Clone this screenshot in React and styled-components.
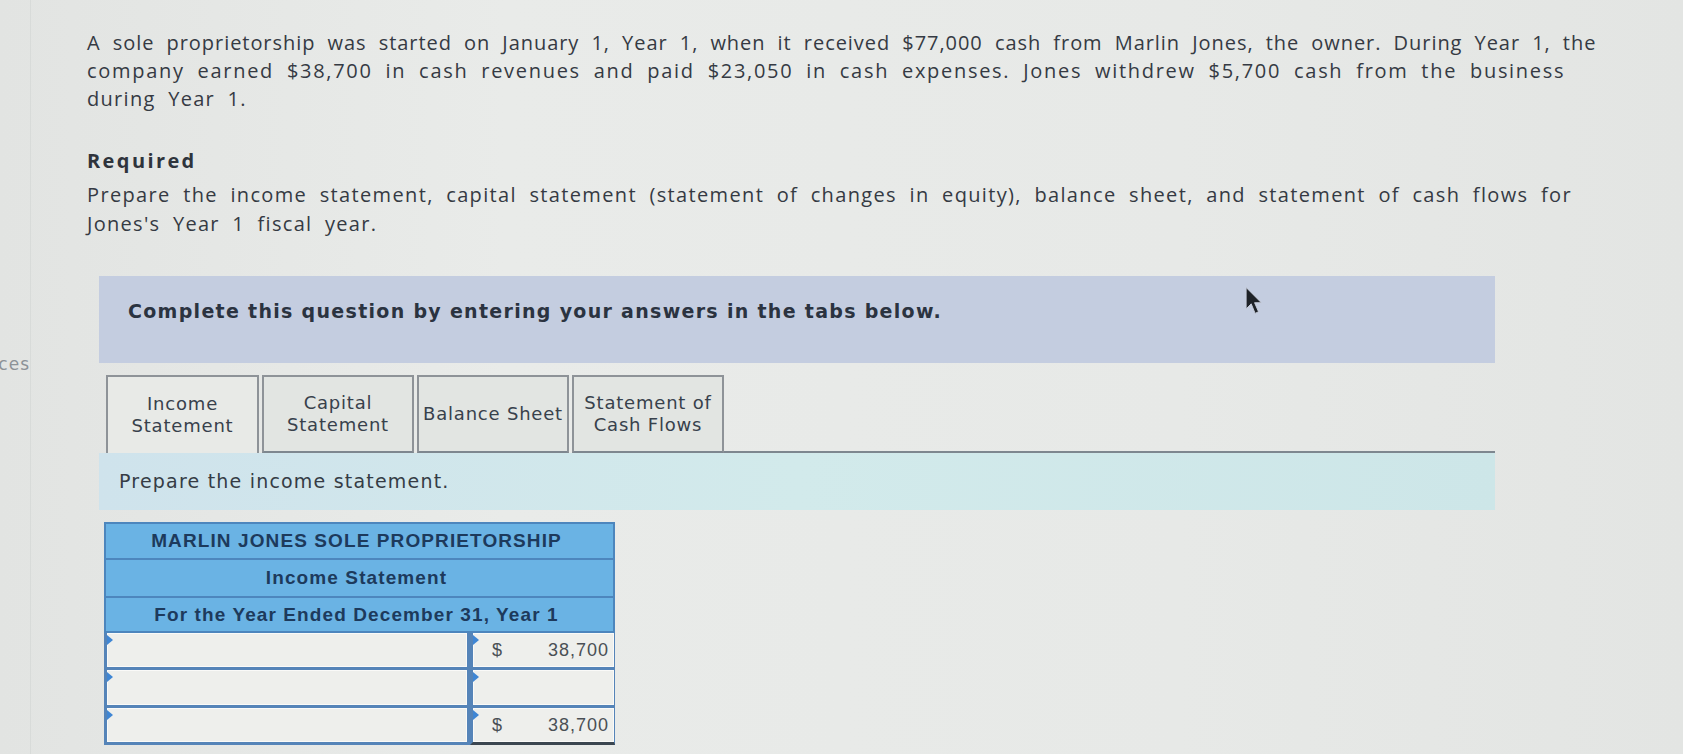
import styled, { createGlobalStyle } from "styled-components";

const GlobalStyle = createGlobalStyle`
    body {
        margin: 0;
        background: #e6e8e6;
        font-family: "Open Sans", "Lato", sans-serif;
    }
`;

const Page = styled.div`
    display: flex;
    min-height: 754px;
    background: linear-gradient(90deg, #e2e4e2 0%, #e9ebe9 30%, #e7e9e7 70%, #e3e5e3 100%);
`;

const Sidebar = styled.div`
    width: 30px;
    flex-shrink: 0;
    display: flex;
    justify-content: flex-end;
    overflow: hidden;
    padding-top: 354px;
    border-right: 1px solid #d8dbd9;
`;

const SideLabel = styled.span`
    font-family: "DejaVu Sans", sans-serif;
    font-size: 17px;
    letter-spacing: 1px;
    color: #8c9297;
    white-space: nowrap;
    height: 20px;
`;

const Main = styled.div`
    flex: 1;
    padding: 29px 0 0 56px;
`;

const Para = styled.p`
    margin: 0;
    font-size: 20px;
    line-height: 28px;
    color: #353a43;
    word-spacing: 6px;
    white-space: nowrap;
`;

const Line = styled.span`
    display: block;
    letter-spacing: ${(p) => p.$ls}px;
`;

const Required = styled.h3`
    margin: 34px 0 5px;
    font-size: 20px;
    line-height: 28px;
    font-weight: 700;
    color: #2f343c;
    letter-spacing: 2.4px;
`;

const Task = styled(Para)`
    line-height: 29px;
`;

const Question = styled.div`
    margin: 38px 0 0 12px;
    width: 1396px;
`;

const Band = styled.div`
    position: relative;
    height: 87px;
    box-sizing: border-box;
    padding: 23px 0 0 29px;
    background: #c4cde0;
    font-family: "DejaVu Sans", sans-serif;
    font-weight: 700;
    font-size: 19px;
    letter-spacing: 1.3px;
    line-height: 24px;
    color: #2b3340;
`;

const Cursor = styled.svg`
    position: absolute;
    left: 1146px;
    top: 10px;
`;

const TabRow = styled.div`
    display: flex;
    align-items: stretch;
    margin-top: 12px;
    padding-left: 7px;
`;

const Tab = styled.div`
    width: ${(p) => (p.$active ? 153 : 152)}px;
    height: 78px;
    box-sizing: border-box;
    margin-right: 3px;
    display: flex;
    align-items: center;
    justify-content: center;
    text-align: center;
    font-family: "DejaVu Sans", sans-serif;
    font-size: 18px;
    letter-spacing: 0.8px;
    line-height: 22px;
    color: #38414c;
    background: ${(p) => (p.$active ? "#e8eae7" : "#e2e5e2")};
    border: 2px solid #8e9398;
    border-bottom: ${(p) => (p.$active ? "none" : "2px solid #7e878f")};
`;

const TabFill = styled.div`
    flex: 1;
    margin-left: -3px;
    border-bottom: 2px solid #7e878f;
`;

const Panel = styled.div`
    height: 57px;
    box-sizing: border-box;
    padding: 15px 0 0 20px;
    background: linear-gradient(90deg, #cfe3ec 0%, #d2eaeb 50%, #cde6e8 100%);
    font-family: "DejaVu Sans", sans-serif;
    font-size: 19px;
    letter-spacing: 1.2px;
    line-height: 26px;
    color: #353c45;
`;

const Sheet = styled.div`
    margin: 12px 0 0 5px;
    width: 511px;
    display: grid;
    grid-template-columns: 366px 145px;
    font-family: "Liberation Sans", Arial, sans-serif;
`;

const HeadCell = styled.div`
    grid-column: 1 / -1;
    height: ${(p) => p.$h}px;
    box-sizing: border-box;
    display: flex;
    align-items: center;
    justify-content: center;
    background: #6ab3e4;
    border: 2px solid #4d86bd;
    border-top-width: ${(p) => (p.$first ? 2 : 0)}px;
    font-weight: 700;
    font-size: 19px;
    letter-spacing: 1.1px;
    color: #1d3a5c;
    padding-right: ${(p) => p.$shift}px;
`;

const InputCell = styled.div`
    position: relative;
    height: ${(p) => p.$h}px;
    box-sizing: border-box;
    display: flex;
    align-items: center;
    background: #eeefec;
    border: 3px solid #5584b8;
    border-top-width: 0;
    border-right-width: ${(p) => (p.$wide ? 3 : 1)}px;
    border-bottom: ${(p) => (p.$total ? "3px solid #3b4650" : "3px solid #5584b8")};
    box-shadow: inset 0 0 0 1px #fafaf8;
    padding: 0 5px 0 17px;
    font-size: 18px;
    letter-spacing: 1px;
    color: #4a4f55;

    &::before {
        content: "";
        position: absolute;
        left: 0;
        top: 2px;
        border-top: 5px solid transparent;
        border-bottom: 5px solid transparent;
        border-left: 6px solid #3f86d4;
    }
`;

const Dollar = styled.span`
    margin-left: 2px;
`;

const Amount = styled.span`
    margin-left: auto;
`;

const tabs = [
    ["Income", "Statement"],
    ["Capital", "Statement"],
    ["Balance Sheet"],
    ["Statement of", "Cash Flows"],
];

const rows = [
    { amount: "38,700", dollar: true, h: 37 },
    { amount: "", dollar: false, h: 38 },
    { amount: "38,700", dollar: true, h: 37, total: true },
];

function App() {
    return (
        <>
            <GlobalStyle />
            <Page>
                <Sidebar>
                    <SideLabel>Resources</SideLabel>
                </Sidebar>
                <Main>
                    <Para>
                        <Line $ls={0.95}>
                            A sole proprietorship was started on January 1, Year 1, when it received $77,000 cash from Marlin Jones, the owner. During Year 1, the
                        </Line>
                        <Line $ls={1.7}>
                            company earned $38,700 in cash revenues and paid $23,050 in cash expenses. Jones withdrew $5,700 cash from the business
                        </Line>
                        <Line $ls={1.3}>during Year 1.</Line>
                    </Para>
                    <Required>Required</Required>
                    <Task>
                        <Line $ls={1.35}>
                            Prepare the income statement, capital statement (statement of changes in equity), balance sheet, and statement of cash flows for
                        </Line>
                        <Line $ls={1.3}>Jones's Year 1 fiscal year.</Line>
                    </Task>

                    <Question>
                        <Band>
                            Complete this question by entering your answers in the tabs below.
                            <Cursor width="18" height="30" viewBox="0 0 16 26">
                                <path d="M1 1 L1 20 L5.5 15.5 L9 24 L12 22.5 L8.5 14.5 L14.5 14.5 Z" fill="#1e2228" stroke="#c9cfdc" strokeWidth="0.8" />
                            </Cursor>
                        </Band>

                        <TabRow>
                            {tabs.map((lines, i) => (
                                <Tab key={i} $active={i === 0}>
                                    <div>
                                        {lines.map((l) => (
                                            <div key={l}>{l}</div>
                                        ))}
                                    </div>
                                </Tab>
                            ))}
                            <TabFill />
                        </TabRow>

                        <Panel>Prepare the income statement.</Panel>

                        <Sheet>
                            <HeadCell $h={38} $first $shift={6}>MARLIN JONES SOLE PROPRIETORSHIP</HeadCell>
                            <HeadCell $h={38} $shift={6}>Income Statement</HeadCell>
                            <HeadCell $h={35} $shift={6}>For the Year Ended December 31, Year 1</HeadCell>
                            {rows.map((r, i) => [
                                <InputCell key={`l${i}`} $h={r.h} $wide />,
                                <InputCell key={`r${i}`} $h={r.h} $total={r.total}>
                                    {r.dollar && <Dollar>$</Dollar>}
                                    <Amount>{r.amount}</Amount>
                                </InputCell>,
                            ])}
                        </Sheet>
                    </Question>
                </Main>
            </Page>
        </>
    );
}

export default App;
